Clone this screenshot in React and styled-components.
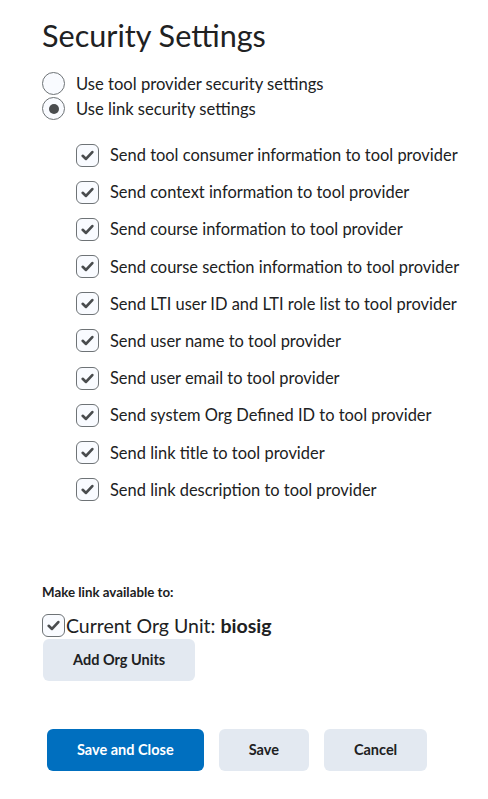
import styled, { createGlobalStyle } from "styled-components";

const GlobalStyle = createGlobalStyle`
  body {
    margin: 0;
    background: #fff;
    font-family: Lato, "Noto Sans", sans-serif;
    color: #202122;
  }
`;

const Page = styled.div`
  padding: 18px 0 0 42px;
  width: 446px;
`;

const Title = styled.h1`
  margin: 0 0 18px;
  font-size: 30.6px;
  font-weight: 400;
  line-height: 36px;
`;

const RadioGroup = styled.div`
  display: flex;
  flex-direction: column;
  gap: 2px;
`;

const RadioRow = styled.label`
  display: flex;
  align-items: center;
  gap: 11px;
  font-size: 16.6px;
  line-height: 22px;
`;

const RadioCircle = styled.span`
  box-sizing: border-box;
  width: 23px;
  height: 23px;
  border-radius: 50%;
  border: 1px solid #6e7376;
  background: #f9fbff;
  display: flex;
  align-items: center;
  justify-content: center;
  flex-shrink: 0;
  &::after {
    content: "";
    width: 10px;
    height: 10px;
    border-radius: 50%;
    background: #494c4e;
    display: ${(p) => (p.checked ? "block" : "none")};
  }
`;

const CheckList = styled.div`
  margin: 23px 0 0 34px;
  display: flex;
  flex-direction: column;
  gap: 13.2px;
`;

const CheckRow = styled.label`
  display: flex;
  align-items: center;
  gap: ${(p) => p.gap || 11}px;
  font-size: ${(p) => p.size || 16.45}px;
  line-height: 24px;
`;

const Box = styled.span`
  box-sizing: border-box;
  width: 23px;
  height: 23px;
  border: 1px solid #6e7376;
  border-radius: 6px;
  background: #f9fbff;
  display: flex;
  align-items: center;
  justify-content: center;
  flex-shrink: 0;
`;

const Section = styled.div`
  margin-top: 80px;
`;

const Label = styled.div`
  font-size: 13.3px;
  font-weight: 700;
  line-height: 20px;
  margin-bottom: 12px;
`;

const Button = styled.button`
  box-sizing: border-box;
  height: 42px;
  padding: 0 30px;
  border: none;
  border-radius: 6px;
  font-family: Lato, "Noto Sans", sans-serif;
  font-size: 14.5px;
  font-weight: 700;
  background: ${(p) => (p.primary ? "#006fbf" : "#e3e9f1")};
  color: ${(p) => (p.primary ? "#fff" : "#202122")};
`;

const AddWrap = styled.div`
  margin-top: 1px;
  padding-left: 1px;
`;

const Actions = styled.div`
  display: flex;
  gap: 15px;
  margin: 48px 0 0 5px;
`;

const Check = () => (
  <svg width="15" height="15" viewBox="0 0 14 14">
    <path d="M2.5 7.3 L5.6 10.2 L11.5 3.8" fill="none" stroke="#494c4e" strokeWidth="2.5" strokeLinecap="round" strokeLinejoin="round" />
  </svg>
);

const options = [
  "Send tool consumer information to tool provider",
  "Send context information to tool provider",
  "Send course information to tool provider",
  "Send course section information to tool provider",
  "Send LTI user ID and LTI role list to tool provider",
  "Send user name to tool provider",
  "Send user email to tool provider",
  "Send system Org Defined ID to tool provider",
  "Send link title to tool provider",
  "Send link description to tool provider",
];

export default function App() {
  return (
    <Page>
      <GlobalStyle />
      <Title>Security Settings</Title>
      <RadioGroup>
        <RadioRow>
          <RadioCircle />
          Use tool provider security settings
        </RadioRow>
        <RadioRow>
          <RadioCircle checked />
          Use link security settings
        </RadioRow>
      </RadioGroup>
      <CheckList>
        {options.map((o) => (
          <CheckRow key={o}>
            <Box>
              <Check />
            </Box>
            {o}
          </CheckRow>
        ))}
      </CheckList>
      <Section>
        <Label>Make link available to:</Label>
        <CheckRow gap={1} size={19.5}>
          <Box>
            <Check />
          </Box>
          <span>
            Current Org Unit: <b>biosig</b>
          </span>
        </CheckRow>
        <AddWrap>
          <Button>Add Org Units</Button>
        </AddWrap>
      </Section>
      <Actions>
        <Button primary>Save and Close</Button>
        <Button>Save</Button>
        <Button>Cancel</Button>
      </Actions>
    </Page>
  );
}
